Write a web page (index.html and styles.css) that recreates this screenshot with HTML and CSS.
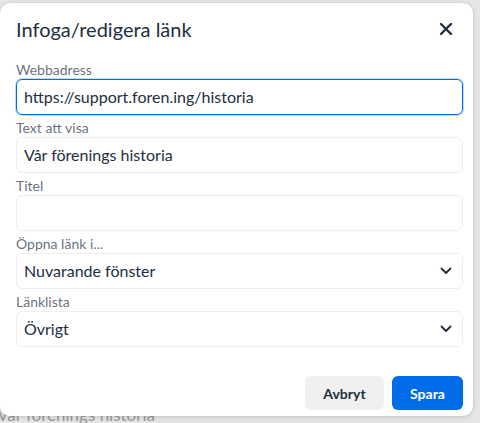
FILE: index.html
```html
<!DOCTYPE html>
<html lang="sv">
<head>
<meta charset="utf-8">
<title>Infoga/redigera länk</title>
<link rel="stylesheet" href="styles.css">
</head>
<body>
<div class="page">
  <p class="page-text">Vår förenings historia</p>
</div>
<div class="dialog" role="dialog">
  <div class="dialog-header">
    <h1 class="dialog-title">Infoga/redigera länk</h1>
    <button class="close-btn" aria-label="Stäng">
      <svg width="14" height="14" viewBox="0 0 14 14"><path d="M2 2 L12 12 M12 2 L2 12" stroke="#222f3e" stroke-width="2.4" stroke-linecap="round" fill="none"/></svg>
    </button>
  </div>
  <div class="dialog-body">
    <div class="field">
      <label class="field-label">Webbadress</label>
      <div class="input focused">https://support.foren.ing/historia</div>
    </div>
    <div class="field">
      <label class="field-label">Text att visa</label>
      <div class="input">Vår förenings historia</div>
    </div>
    <div class="field">
      <label class="field-label">Titel</label>
      <div class="input"></div>
    </div>
    <div class="field">
      <label class="field-label">Öppna länk i...</label>
      <div class="input select">Nuvarande fönster
        <svg class="chevron" width="12" height="8" viewBox="0 0 12 8"><path d="M1.5 1.5 L6 6 L10.5 1.5" stroke="#222f3e" stroke-width="1.8" stroke-linecap="round" stroke-linejoin="round" fill="none"/></svg>
      </div>
    </div>
    <div class="field">
      <label class="field-label">Länklista</label>
      <div class="input select">Övrigt
        <svg class="chevron" width="12" height="8" viewBox="0 0 12 8"><path d="M1.5 1.5 L6 6 L10.5 1.5" stroke="#222f3e" stroke-width="1.8" stroke-linecap="round" stroke-linejoin="round" fill="none"/></svg>
      </div>
    </div>
  </div>
  <div class="dialog-footer">
    <button class="btn btn-secondary">Avbryt</button>
    <button class="btn btn-primary">Spara</button>
  </div>
</div>
</body>
</html>
```
FILE: styles.css
```css
* { box-sizing: border-box; }
html, body {
  margin: 0;
  padding: 0;
  width: 480px;
  height: 423px;
  overflow: hidden;
}
body {
  background: #e6e6e6;
  font-family: Lato, "Noto Sans", sans-serif;
  color: #222f3e;
  position: relative;
}
.page {
  height: 423px;
  display: flex;
  flex-direction: column;
  justify-content: flex-end;
}
.page-text {
  margin: 0 0 -3px -3px;
  font-size: 17px;
  color: #9a9a9a;
  line-height: 22px;
}
.dialog {
  position: absolute;
  left: 0;
  top: 3px;
  width: 473px;
  height: 413px;
  background: #fff;
  border-radius: 10px;
  box-shadow: 0 0 3px rgba(0,0,0,0.12), 0 2px 6px rgba(0,0,0,0.08);
  display: flex;
  flex-direction: column;
  padding: 0 10px 0 16px;
}
.dialog-header {
  display: flex;
  align-items: center;
  justify-content: space-between;
  height: 52px;
}
.dialog-title {
  margin: 0;
  font-size: 20px;
  font-weight: 400;
  line-height: 26px;
}
.close-btn {
  border: 0;
  background: none;
  padding: 0;
  width: 24px;
  height: 24px;
  display: flex;
  align-items: center;
  justify-content: center;
  margin-right: 5px;
}
.dialog-body {
  display: flex;
  flex-direction: column;
  gap: 4px;
  padding-top: 6px;
}
.field {
  display: flex;
  flex-direction: column;
}
.field-label {
  font-size: 14px;
  line-height: 18px;
  color: rgba(34,47,62,0.7);
}
.input {
  height: 36px;
  border: 1px solid #eeeeee;
  border-radius: 6px;
  padding: 0 7px;
  font-size: 16px;
  line-height: 34px;
  color: #222f3e;
  display: flex;
  align-items: center;
  justify-content: space-between;
}
.input.focused {
  border-color: #006ce7;
  box-shadow: 0 0 0 1px rgba(0,108,231,0.25);
}
.chevron { margin-right: 3px; }
.dialog-footer {
  margin-top: auto;
  display: flex;
  justify-content: flex-end;
  gap: 8px;
  padding-bottom: 6px;
}
.btn {
  height: 34px;
  border: 0;
  border-radius: 6px;
  padding: 0 16px;
  font-family: Lato, "Noto Sans", sans-serif;
  font-size: 14px;
  font-weight: 700;
}
.btn-secondary {
  background: #f0f0f0;
  color: #222f3e;
  width: 79px;
}
.btn-primary {
  background: #006ce7;
  color: #fff;
  width: 71px;
}
```
